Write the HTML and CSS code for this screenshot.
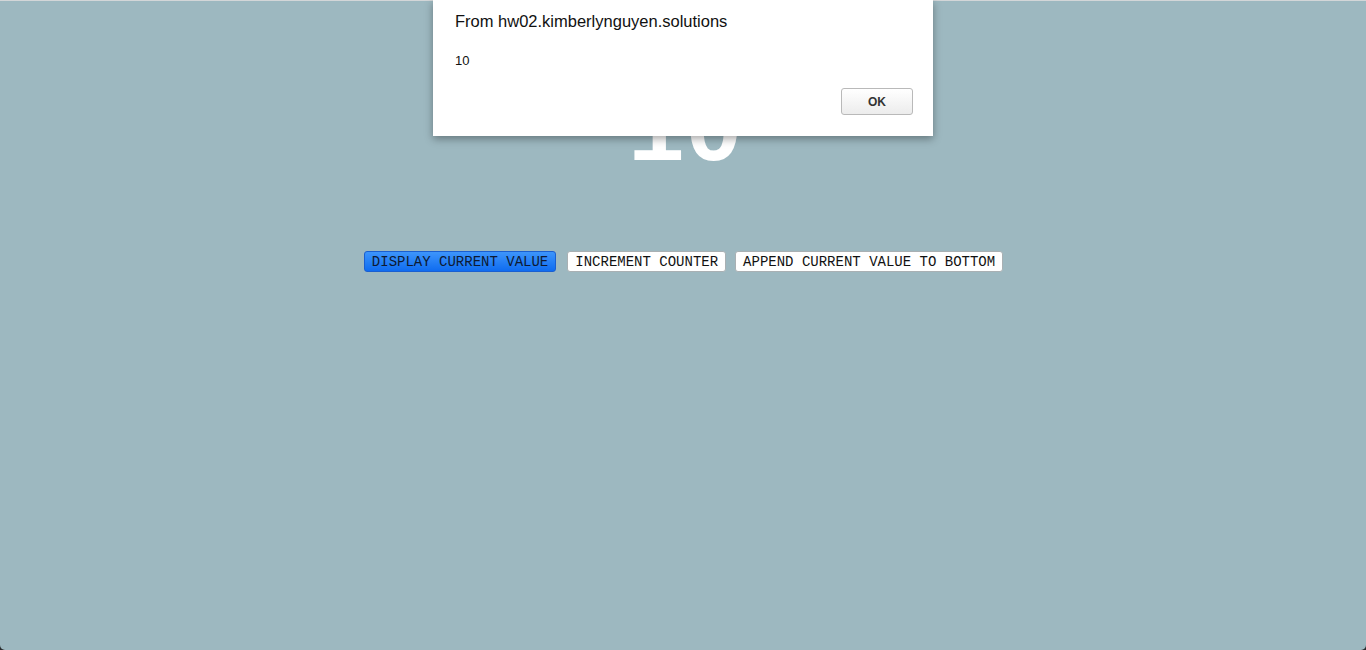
FILE: index.html
```html
<!DOCTYPE html>
<html lang="en">
<head>
<meta charset="utf-8">
<title>Counter</title>
<link rel="stylesheet" href="styles.css">
</head>
<body>
<main class="page">
  <h1 class="counter">10</h1>
  <div class="controls">
    <button class="btn btn-active">DISPLAY CURRENT VALUE</button>
    <button class="btn">INCREMENT COUNTER</button>
    <button class="btn">APPEND CURRENT VALUE TO BOTTOM</button>
  </div>
</main>
<div class="dialog">
  <div class="dialog-title">From hw02.kimberlynguyen.solutions</div>
  <div class="dialog-msg">10</div>
  <div class="dialog-actions"><button class="ok">OK</button></div>
</div>
</body>
</html>
```
FILE: styles.css
```css
html {
  background: #2a2d2f;
  height: 100%;
}
body {
  margin: 0;
  height: 100%;
  box-sizing: border-box;
  background: #9db8c0;
  border-top: 1px solid #d3d6d8;
  border-radius: 0 0 5px 5px;
  overflow: hidden;
}
.page {
  display: flex;
  flex-direction: column;
  align-items: center;
  padding-top: 86px;
}
.counter {
  margin: 0;
  font-family: "Liberation Mono", "Courier New", monospace;
  font-weight: bold;
  font-size: 96px;
  line-height: 96px;
  color: #ffffff;
  padding-left: 4px;
}
.controls {
  margin-top: 68px;
  display: flex;
  gap: 10px;
  padding-left: 1px;
}
.btn {
  font-family: "Liberation Mono", "Courier New", monospace;
  font-size: 14px;
  line-height: 16px;
  height: 21px;
  padding: 0 7px;
  color: #111;
  background: #ffffff;
  border: 1px solid #a9b0b3;
  border-radius: 3px;
}
.btn-active {
  background: linear-gradient(#3d95fb, #0f6cf0);
  border-color: #1a5fd0;
  color: #0d1a33;
  margin-right: 1px;
}
.btn:last-child {
  margin-left: -1px;
}
.dialog {
  position: absolute;
  left: 433px;
  top: 0;
  width: 500px;
  height: 136px;
  box-sizing: border-box;
  background: #ffffff;
  box-shadow: 0 3px 8px rgba(0, 0, 0, 0.35);
  padding: 12px 20px 0 22px;
  font-family: "Liberation Sans", Arial, sans-serif;
  color: #111;
}
.dialog-title {
  font-size: 16.5px;
  line-height: 18px;
}
.dialog-msg {
  font-size: 13px;
  margin-top: 23px;
  line-height: 16px;
}
.dialog-actions {
  display: flex;
  justify-content: flex-end;
  margin-top: 19px;
}
.ok {
  width: 72px;
  height: 27px;
  font-family: "Liberation Sans", Arial, sans-serif;
  font-weight: bold;
  font-size: 12px;
  color: #333;
  background: linear-gradient(#ffffff, #ececec);
  border: 1px solid #b9b9b9;
  border-radius: 3px;
}
```
